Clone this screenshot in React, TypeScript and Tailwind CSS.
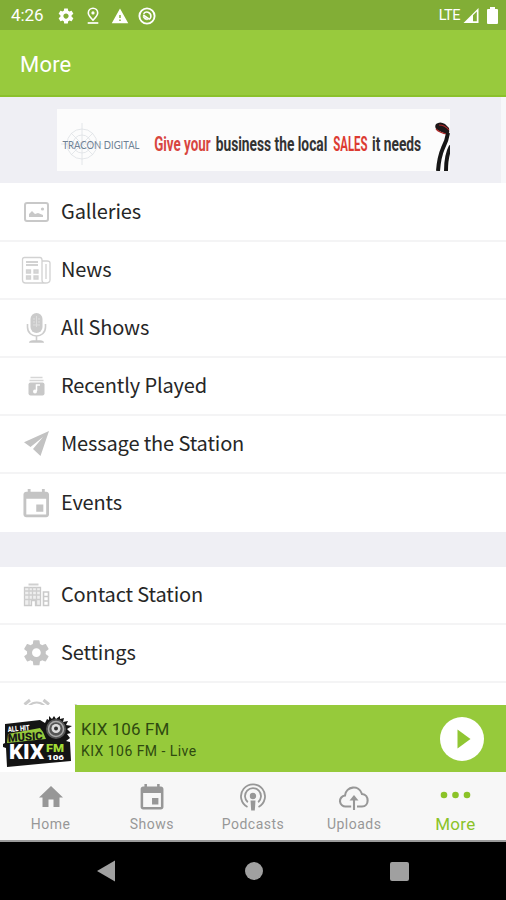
import type { ReactNode } from 'react';
import clsx from 'clsx';

const GEAR =
  'M19.43 12.98c.04-.32.07-.64.07-.98s-.03-.66-.07-.98l2.11-1.65c.19-.15.24-.42.12-.64l-2-3.46c-.12-.22-.39-.3-.61-.22l-2.49 1c-.52-.4-1.08-.73-1.69-.98l-.38-2.65C14.46 2.18 14.25 2 14 2h-4c-.25 0-.46.18-.49.42l-.38 2.65c-.61.25-1.17.59-1.69.98l-2.49-1c-.23-.09-.49 0-.61.22l-2 3.46c-.13.22-.07.49.12.64l2.11 1.65c-.04.32-.07.65-.07.98s.03.66.07.98l-2.11 1.65c-.19.15-.24.42-.12.64l2 3.46c.12.22.39.3.61.22l2.49-1c.52.4 1.08.73 1.69.98l.38 2.65c.03.24.24.42.49.42h4c.25 0 .46-.18.49-.42l.38-2.65c.61-.25 1.17-.59 1.69-.98l2.49 1c.23.09.49 0 .61-.22l2-3.46c.12-.22.07-.49-.12-.64l-2.11-1.65zM12 15.5c-1.93 0-3.5-1.57-3.5-3.5s1.57-3.5 3.5-3.5 3.5 1.57 3.5 3.5-1.57 3.5-3.5 3.5z';
const EVENT =
  'M17 12h-5v5h5v-5zM16 1v2H8V1H6v2H5c-1.11 0-1.99.9-1.99 2L3 19c0 1.1.89 2 2 2h14c1.1 0 2-.9 2-2V5c0-1.1-.9-2-2-2h-1V1h-2zm3 18H5V8h14v11z';

function StatusBar() {
  return (
    <div className="flex h-[30px] shrink-0 items-center bg-[#82ae36] pl-[11px] pr-[8px] pt-px text-white">
      <span className="w-[46px] text-[17px] leading-none tracking-[-0.1px]">4:26</span>
      <svg className="size-[18px]" viewBox="0 0 24 24" fill="currentColor">
        <path d={GEAR} />
      </svg>
      <svg className="ml-[10px] h-[18px] w-[16px]" viewBox="0 0 16 18" fill="none" stroke="currentColor">
        <path d="M8 13.200C5.300 10.400 3.300 8.300 3.300 5.900a4.700 4.700 0 0 1 9.400 0C12.700 8.300 10.700 10.400 8 13.200z" strokeWidth="1.600" />
        <circle cx="8" cy="5.900" r="1.600" fill="currentColor" stroke="none" />
        <path d="M2.700 16h10.600" strokeWidth="1.700" />
      </svg>
      <svg className="ml-[10px] h-[18px] w-[18px]" viewBox="0 0 24 24" fill="currentColor">
        <path d="M1 21.500h22L12 2 1 21.500zm12-3h-2v-2h2v2zm0-4h-2v-4h2v4z" />
      </svg>
      <svg className="ml-[9px] size-[18px]" viewBox="0 0 18 18" fill="none" stroke="currentColor">
        <circle cx="9" cy="9" r="7.600" strokeWidth="1.900" />
        <path d="M5.600 6.800c2-3.200 7.300-1.900 7.300 2.400 0 1.400-.7 2.500-1.500 3M5.200 8l6.400 4.400" strokeWidth="1.600" />
        <path d="M5 9.300c.3 2.800 2.800 4 5 3.300z" fill="currentColor" strokeWidth="0.500" />
      </svg>
      <span className="ml-auto pt-px text-[14.500px] leading-none tracking-[-0.5px]">LTE</span>
      <svg className="ml-[3px] size-[16px]" viewBox="0 0 16 16">
        <path d="M.5 15 15.500 0v15z" fill="white" />
        <path d="M10 7.200 13.800 3.500v9.800H10z" fill="#82ae36" />
      </svg>
      <svg className="ml-[8px] h-[17px] w-[11px]" viewBox="0 0 11 17" fill="white">
        <path d="M3 0h5v2h2q1 0 1 1v13q0 1-1 1H1q-1 0-1-1V3q0-1 1-1h2z" />
      </svg>
    </div>
  );
}

function AdBanner() {
  return (
    <div className="flex h-[86px] border-r-[5px] border-[#f7f7fa] bg-[#efeff4] pl-[57px] pt-[12px]">
      <svg className="h-[62px] w-[393px] bg-[#fcfcfc]" viewBox="0 0 393 62">
        <g fill="none" stroke="#dde1e4" strokeWidth="0.8">
          <circle cx="25" cy="35" r="15" />
          <circle cx="25" cy="35" r="9" />
          <path d="M25 14v42M4 35h42M14 24l22 22M36 24 14 46" />
        </g>
        <text x="5.500" y="39.500" fontSize="10.500" fontFamily="Lato, sans-serif" fill="#6f8295" textLength="77" lengthAdjust="spacingAndGlyphs">
          TRACON DIGITAL
        </text>
        {/* condensed headline: x positions are in the squeezed space */}
        <g transform="scale(.6 1)" fontFamily="Roboto, sans-serif" fontWeight="700" fontSize="21">
          <text x="162" y="42" fill="#d8463f" textLength="94" lengthAdjust="spacingAndGlyphs">Give your</text>
          <text x="264.500" y="42" fill="#333" textLength="186" lengthAdjust="spacingAndGlyphs">business the local</text>
          <text x="460.500" y="42" fill="#dc3b32" textLength="57" lengthAdjust="spacingAndGlyphs">SALES</text>
          <text x="525" y="42" fill="#333" textLength="82" lengthAdjust="spacingAndGlyphs">it needs</text>
        </g>
        <path d="M379 15q4-3 9 0l4 4q1 4-1 7l-11-5q-3-3-1-6z" fill="#1d1718" />
        <path d="M379 20q4 4 11 5M382 16q6 0 10 5" fill="none" stroke="#b02b2b" strokeWidth="1.200" />
        <path d="M391 24q-1 7-5 15-4 9-5 23" fill="none" stroke="#161616" strokeWidth="4" />
        <path d="M394 37q-5 9-5 25" fill="none" stroke="#161616" strokeWidth="4" />
      </svg>
    </div>
  );
}

// Every menu drawing shares a 30px canvas, centred in the icon column
const icons: Record<string, ReactNode> = {
  galleries: (
    <>
      <rect x="4" y="6" width="23" height="18" rx="2" fill="none" stroke="#c8c8c8" strokeWidth="2" />
      <path d="M8 20v-3l3-3 3 3 3-1 5 2v2z" fill="#c8c8c8" />
      <circle cx="21.500" cy="12" r="1.600" fill="#c8c8c8" />
    </>
  ),
  news: (
    <g fill="none" stroke="#d2d2d2" strokeWidth="1.300">
      <path d="M21 5q0-2.500-2-2.500H3.500q-2 0-2 2V25q0 3 3 3h20q4.500 0 4.500-3V8q0-2-3-2H21zM21 5v20q0 3 2.500 3M25 9v15" />
      <path d="M5 7h12M5 10h12" strokeWidth="2" />
      <path d="M5.500 15h4v3h-4zM13 15h4v3h-4zM5.500 21h4v3h-4zM13 21h4v3h-4z" fill="#d8d8d8" />
    </g>
  ),
  mic: (
    <>
      <rect x="9.500" y="0" width="12" height="20" rx="6" fill="#cbcbcb" />
      <path d="M15.500 3v11M12 6h2M12 9h2M17 6h2M17 9h2M12 12h7" fill="none" stroke="#dedede" />
      <path d="M6.500 11v3c0 12 18 12 18 0v-3M15.500 23v5" fill="none" stroke="#cdcdcd" strokeWidth="1.600" />
      <path d="M8 29.800q0-2.500 4-2.500h7q4 0 4 2.500z" fill="#c8c8c8" />
    </>
  ),
  recent: (
    <>
      <path d="M9.500 6.500h12M8.500 9.500h14" stroke="#d6d6d6" strokeWidth="1.700" />
      <rect x="7.500" y="11.500" width="16" height="13" rx="2" fill="#c8c8c8" />
      <path d="M15.500 20v-6h3.500" fill="none" stroke="white" strokeWidth="1.500" />
      <circle cx="14" cy="20.500" r="2" fill="white" />
    </>
  ),
  message: <path d="M28 2 3 13.300 9.500 18 22 8 12 20l7.500 7z" fill="#c2c2c2" />,
  events: <path transform="translate(-1.800 -0.500) scale(1.420)" d={EVENT} fill="#c4c4c4" />,
  contact: (
    <>
      <path d="M7.500 4.500h10" stroke="#d0d0d0" strokeWidth="2" />
      <path d="M3.500 7.500h16v18h-5v-5h-4v5h-7z" fill="#efefef" stroke="#cacaca" strokeWidth="1.300" />
      <path d="M8 7v18M11.500 7v13M15.500 7v18M3 11h16M3 15h16M3 19.500h16" fill="none" stroke="#cecece" strokeWidth="1.300" />
      <path d="M22.500 12h5v13.500h-5zM22 16.500h6M22 21h6" fill="none" stroke="#cacaca" strokeWidth="1.600" />
    </>
  ),
  settings: <path transform="translate(0.400 -0.300) scale(1.250)" d={GEAR} fill="#c4c4c4" />,
  alarm: (
    <g fill="none" stroke="#cbcbcb">
      <path d="M3.500 8.500 9 4M28 8.500 22.500 4" strokeWidth="3" />
      <circle cx="15.700" cy="17" r="10.500" strokeWidth="2" />
      <path d="M15.700 10v7l5 3" strokeWidth="2" />
    </g>
  ),
};

function MenuRow({ icon, label, last }: { icon: string; label: string; last?: boolean }) {
  return (
    <div className={clsx('flex h-[58px] shrink-0 items-center bg-white pl-[20.5px]', !last && 'border-b-2 border-[#f4f4f5]')}>
      <svg className="size-[30px]" viewBox="0 0 30 30">
        {icons[icon]}
      </svg>
      <span
        className={clsx(
          "ml-[10.5px] font-['Noto_Sans_CJK_SC','Noto_Sans',sans-serif] text-[20px] leading-none tracking-[-0.14px] text-[#262626]",
          icon === 'alarm' ? 'pt-[3px]' : 'pb-[2px]',
        )}
      >
        {label}
      </span>
    </div>
  );
}

function StationLogo() {
  return (
    <svg className="h-[67px] w-[75px] shrink-0 bg-white" viewBox="0 0 75 67">
      <path
        d="M5 19 40 15l5 3 2-4 2 1 0-4 3 3 2-3 2 3 4-3 0 3 4-1-1 4 5-1-2 4 6 1-5 3 4 4-4 1 3 4-4 3 4 1 1 19-22 2-42 4-1-19-3-1v-3l2-1z"
        fill="#141414"
      />
      <path d="M8 29 40 23l3 4 3 7-39 4z" fill="#96ca3b" />
      <circle cx="56" cy="24" r="10" fill="#555" />
      <circle cx="56" cy="24" r="7.500" fill="none" stroke="#aaa" strokeWidth="1.500" />
      <circle cx="56" cy="23.500" r="4.500" fill="#ddd" />
      <circle cx="56" cy="23.500" r="2" fill="#333" />
      <g fontFamily="Roboto, sans-serif" fontWeight="900">
        <text x="8" y="27" transform="rotate(-5 8 27)" fontSize="7.500" fill="white" textLength="22" lengthAdjust="spacingAndGlyphs">ALL HIT</text>
        <text x="8" y="37" transform="rotate(-4 8 37)" fontSize="11" fill="#171717" textLength="35" lengthAdjust="spacingAndGlyphs">MUSIC</text>
        <text x="9" y="54" fontSize="20.500" fill="white" textLength="35" lengthAdjust="spacingAndGlyphs">KIX</text>
        <text x="46" y="47" fontSize="11" fill="#a3dc35" textLength="18" lengthAdjust="spacingAndGlyphs">FM</text>
        <text x="47" y="54.500" fontSize="8" fill="white" textLength="17" lengthAdjust="spacingAndGlyphs">106</text>
      </g>
    </svg>
  );
}

function Player() {
  return (
    <div className="flex h-[67px] shrink-0 items-center bg-[#96ca3b] pr-[22px] text-[#2f4a10]">
      <StationLogo />
      <div className="ml-[6px] flex flex-col gap-[6px] pt-[2px] leading-none">
        <span className="text-[17px] tracking-[0.1px]">KIX 106 FM</span>
        <span className="text-[14px] tracking-[0.45px]">KIX 106 FM - Live</span>
      </div>
      <svg className="ml-auto size-[44px]" viewBox="0 0 44 44">
        <circle cx="22" cy="22" r="22" fill="white" />
        <path d="M17.500 12.500v19L30.500 22z" fill="#90c632" />
      </svg>
    </div>
  );
}

const tabs = [
  {
    label: 'Home',
    icon: <path d="M12.500 25v-7.500h5V25h6v-9.500h3.500L15 4 3 15.500h3.500V25z" fill="currentColor" />,
  },
  { label: 'Shows', icon: <path d={EVENT} transform="translate(-.2 .8) scale(1.270)" fill="currentColor" /> },
  {
    label: 'Podcasts',
    icon: (
      <g fill="none" stroke="currentColor" strokeWidth="1.800">
        <path d="M9.500 25a12 12 0 1 1 11 0" />
        <path d="M9.800 20.200a8 8 0 1 1 10.400 0" />
        <circle cx="15" cy="14" r="3.200" fill="currentColor" stroke="none" />
        <path d="M12.500 18.500h5l-.7 10h-3.600z" fill="currentColor" stroke="none" />
      </g>
    ),
  },
  {
    label: 'Uploads',
    icon: (
      <g fill="none" stroke="currentColor" strokeWidth="2.100">
        <path d="M12.200 24.500H7a5.500 5.500 0 0 1-1-11C7 4 20 2.500 23 12c7.500.5 7.500 12.500 0 12.500h-5M15 28V14.500" />
        <path d="M10.500 18.500 15 13l4.500 5.500z" fill="currentColor" stroke="none" />
      </g>
    ),
  },
  {
    label: 'More',
    icon: (
      <g fill="currentColor">
        <circle cx="4" cy="13" r="3.300" />
        <circle cx="15.500" cy="13" r="3.300" />
        <circle cx="27" cy="13" r="3.300" />
      </g>
    ),
  },
];

function TabBar() {
  return (
    <nav className="grid h-[70px] shrink-0 grid-cols-5 border-b-2 border-[#9b9b9b] bg-[#f7f7f7] pt-[10px]">
      {tabs.map(({ label, icon }) => {
        const active = label === 'More';
        return (
          <div key={label} className={clsx('flex flex-col items-center', active ? 'text-[#8bc327]' : 'text-[#979797]')}>
            <svg className="size-[30px] overflow-visible" viewBox="0 0 30 30">
              {icon}
            </svg>
            <span className={clsx('flex h-[24px] items-center leading-none', active ? 'text-[17px] tracking-[0.3px]' : 'text-[14px] tracking-[0.5px]')}>
              {label}
            </span>
          </div>
        );
      })}
    </nav>
  );
}

function SystemNav() {
  return (
    <div className="grid h-[58px] shrink-0 grid-cols-[212px_83px_209px] items-center bg-black text-[#a0a0a0]">
      <svg className="mx-auto h-[22px] w-[19px]" viewBox="0 0 19 22" fill="currentColor">
        <path d="M0 11 18 .5v21z" />
      </svg>
      <svg className="mx-auto size-[18px]" viewBox="0 0 18 18" fill="currentColor">
        <circle cx="9" cy="9" r="9" />
      </svg>
      <div className="mx-auto size-[19px] rounded-[2px] bg-[#a0a0a0]" />
    </div>
  );
}

export default function App() {
  return (
    <div className="flex h-[900px] w-[506px] flex-col overflow-hidden bg-[#efeff4] font-[Roboto,sans-serif]">
      <StatusBar />
      <header className="flex h-[67px] shrink-0 items-center border-b-2 border-[#8bc12b] bg-[#98ca3d] pl-[20px] pt-[4px] text-[22px] tracking-[0.2px] text-white">
        More
      </header>
      <main className="h-[608px] shrink-0 overflow-hidden">
        <AdBanner />
        <section className="border-t border-white">
          <MenuRow icon="galleries" label="Galleries" />
          <MenuRow icon="news" label="News" />
          <MenuRow icon="mic" label="All Shows" />
          <MenuRow icon="recent" label="Recently Played" />
          <MenuRow icon="message" label="Message the Station" />
          <MenuRow icon="events" label="Events" last />
        </section>
        <section className="mt-[35px]">
          <MenuRow icon="contact" label="Contact Station" />
          <MenuRow icon="settings" label="Settings" />
          <MenuRow icon="alarm" label="Alarm" />
        </section>
      </main>
      <Player />
      <TabBar />
      <SystemNav />
    </div>
  );
}
